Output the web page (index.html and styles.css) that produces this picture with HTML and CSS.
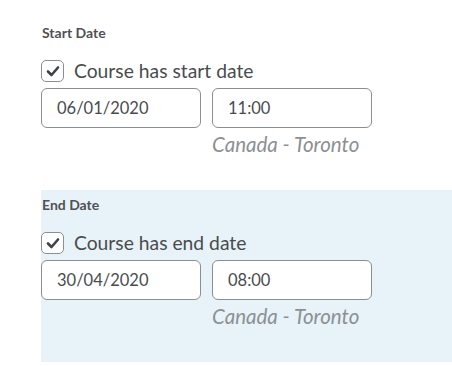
FILE: index.html
```
<!DOCTYPE html>
<html>
<head>
<meta charset="utf-8">
<link rel="stylesheet" href="styles.css">
</head>
<body>
<div class="page">
  <section class="block">
    <div class="label">Start Date</div>
    <label class="check">
      <span class="box"><svg width="14" height="12" viewBox="0 0 14 12"><path d="M2 6.5 L5.5 10 L12 2.5" fill="none" stroke="#3f4244" stroke-width="2.6" stroke-linecap="round" stroke-linejoin="round"/></svg></span>
      <span class="check-text">Course has start date</span>
    </label>
    <div class="inputs">
      <div class="field">06/01/2020</div>
      <div class="col">
        <div class="field">11:00</div>
        <div class="tz">Canada - Toronto</div>
      </div>
    </div>
  </section>
  <section class="block highlight">
    <div class="label">End Date</div>
    <label class="check">
      <span class="box"><svg width="14" height="12" viewBox="0 0 14 12"><path d="M2 6.5 L5.5 10 L12 2.5" fill="none" stroke="#3f4244" stroke-width="2.6" stroke-linecap="round" stroke-linejoin="round"/></svg></span>
      <span class="check-text">Course has end date</span>
    </label>
    <div class="inputs">
      <div class="field">30/04/2020</div>
      <div class="col">
        <div class="field">08:00</div>
        <div class="tz">Canada - Toronto</div>
      </div>
    </div>
  </section>
</div>
</body>
</html>
```
FILE: styles.css
```
html, body { margin: 0; padding: 0; background: #fff; }
body { font-family: Lato, "Noto Sans", sans-serif; color: #494c4e; }
.page { padding: 18px 0 0 41px; width: 411px; }
.block { padding: 5px 0 0 0; height: 172px; box-sizing: border-box; }
.highlight { background: #e8f2f9; }
.label { font-size: 14px; font-weight: 700; line-height: 20px; margin-left: 1px; color: #4f5254; }
.check { display: flex; align-items: center; margin-top: 17px; height: 22px; }
.box { width: 21px; height: 20px; border: 1px solid #8a8f92; border-radius: 5px; background: #fff; display: flex; align-items: center; justify-content: center; box-sizing: content-box; }
.check-text { font-size: 19.3px; margin-left: 10px; line-height: 22px; color: #494c4e; }
.inputs { display: flex; gap: 11px; margin-top: 6px; }
.field { width: 160px; height: 40px; box-sizing: border-box; border: 1px solid #8a8f92; border-radius: 6px; background: #fff; padding-left: 15px; font-size: 16.5px; line-height: 38px; color: #494c4e; }
.col { display: flex; flex-direction: column; }
.tz { font-style: italic; font-size: 20.5px; color: #8b9093; margin-top: 4px; line-height: 24px; }
```
